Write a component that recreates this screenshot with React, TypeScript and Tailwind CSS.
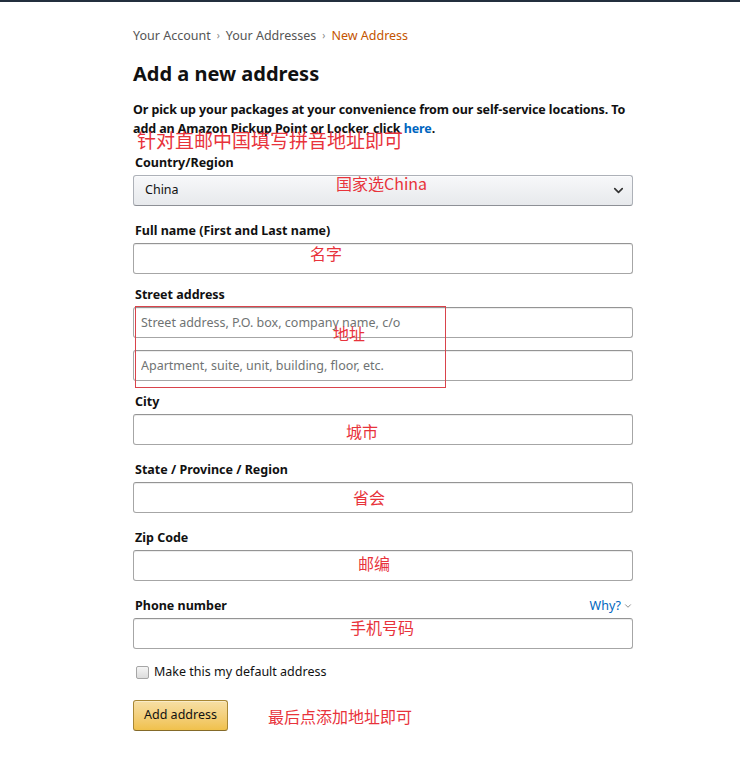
import { ChevronDown } from "lucide-react";

const font = { fontFamily: '"Noto Sans", "Open Sans", Arial, sans-serif' };

const inputCls =
  "w-full h-[31px] px-[7px] text-[12.5px] text-[#111] bg-white border border-[#a6a6a6] border-t-[#949494] rounded-[3px] shadow-[inset_0_1px_0_rgba(0,0,0,0.07)] placeholder:text-[#6f7373] outline-none";

function Label({ children, extra }: { children: React.ReactNode; extra?: React.ReactNode }) {
  return (
    <div className="flex items-center justify-between h-[19px] leading-[19px] mb-[3px] pl-[2px]">
      <span className="text-[12.5px] font-bold text-[#111]">{children}</span>
      {extra}
    </div>
  );
}

function Field({ label, className = "", extra }: { label: string; className?: string; extra?: React.ReactNode }) {
  return (
    <div className={className}>
      <Label extra={extra}>{label}</Label>
      <input className={inputCls} />
    </div>
  );
}

function Note({ children, className }: { children: React.ReactNode; className: string }) {
  return (
    <span
      className={`absolute text-[#e8333b] leading-none whitespace-nowrap ${className}`}
      style={{ fontFamily: '"Noto Sans CJK SC", "Noto Sans", sans-serif' }}
    >
      {children}
    </span>
  );
}

export default function App() {
  return (
    <div className="relative min-h-[763px] bg-white" style={font}>
      <div className="h-[2px] bg-[#232f3e]" />

      <div className="w-[500px] ml-[133px]">
        {/* breadcrumb */}
        <div className="pt-[24px] flex items-center text-[12.5px] leading-[19px] text-[#555]">
          <span>Your Account</span>
          <span className="mx-[6px] text-[10px] text-[#888]">›</span>
          <span>Your Addresses</span>
          <span className="mx-[6px] text-[10px] text-[#888]">›</span>
          <span className="text-[#c45500]">New Address</span>
        </div>

        <h1 className="mt-[15px] text-[20px] leading-[28px] font-bold text-[#111]">Add a new address</h1>

        <p className="mt-[12px] text-[12.5px] leading-[19px] font-bold text-[#111] tracking-[-0.1px]">
          Or pick up your packages at your convenience from our self-service locations. To add an Amazon Pickup Point or
          Locker, click <span className="text-[#0066c0]">here</span>.
        </p>

        {/* country */}
        <div className="mt-[15px]">
          <Label>Country/Region</Label>
          <div className="flex items-center justify-between h-[31px] pl-[11px] pr-[6px] rounded-[3px] border border-[#adb1b8] border-b-[#8d9096] bg-gradient-to-b from-[#f7f8fa] to-[#e7e9ec] shadow-[0_1px_0_rgba(255,255,255,0.6)_inset] text-[12.5px] text-[#111]">
            <span>China</span>
            <ChevronDown size={15} strokeWidth={2.6} className="text-[#333]" />
          </div>
        </div>

        <Field label="Full name (First and Last name)" className="mt-[15px]" />

        <div className="mt-[11px]">
          <Label>Street address</Label>
          <div className="flex flex-col gap-[12px]">
            <input placeholder="Street address, P.O. box, company name, c/o" className={inputCls} />
            <input placeholder="Apartment, suite, unit, building, floor, etc." className={inputCls} />
          </div>
        </div>

        <Field label="City" className="mt-[11px]" />
        <Field label="State / Province / Region" className="mt-[15px]" />
        <Field label="Zip Code" className="mt-[15px]" />
        <Field
          label="Phone number"
          className="mt-[15px]"
          extra={
            <span className="flex items-center text-[12.5px] text-[#0066c0] font-normal">
              Why?
              <ChevronDown size={10} strokeWidth={2} className="ml-[2px] text-[#777]" />
            </span>
          }
        />

        <label className="mt-[14px] flex items-center h-[19px] text-[12.5px] text-[#111]">
          <span className="ml-[3px] w-[13px] h-[13px] rounded-[2px] border border-[#a6a6a6] bg-gradient-to-b from-[#f5f5f5] to-[#dcdcdc]" />
          <span className="ml-[5px]">Make this my default address</span>
        </label>

        <button className="mt-[18px] h-[31px] px-[10px] rounded-[3px] border border-[#a88734] border-b-[#846a29] bg-gradient-to-b from-[#f7dfa5] to-[#f0c14b] text-[12.5px] text-[#111] shadow-[inset_0_1px_0_rgba(255,255,255,0.4)]">
          Add address
        </button>
      </div>

      {/* annotations */}
      <Note className="left-[137px] top-[130px] text-[19px]">针对直邮中国填写拼音地址即可</Note>
      <Note className="left-[336px] top-[175px] text-[16px]">国家选China</Note>
      <Note className="left-[310px] top-[245px] text-[16px]">名字</Note>
      <Note className="left-[333px] top-[325px] text-[16px]">地址</Note>
      <Note className="left-[346px] top-[423px] text-[16px]">城市</Note>
      <Note className="left-[353px] top-[489px] text-[16px]">省会</Note>
      <Note className="left-[358px] top-[555px] text-[16px]">邮编</Note>
      <Note className="left-[350px] top-[619px] text-[16px]">手机号码</Note>
      <Note className="left-[268px] top-[708px] text-[16px]">最后点添加地址即可</Note>
      <div className="absolute left-[135px] top-[306px] w-[311px] h-[82px] border border-[#d9434b]" />
    </div>
  );
}
